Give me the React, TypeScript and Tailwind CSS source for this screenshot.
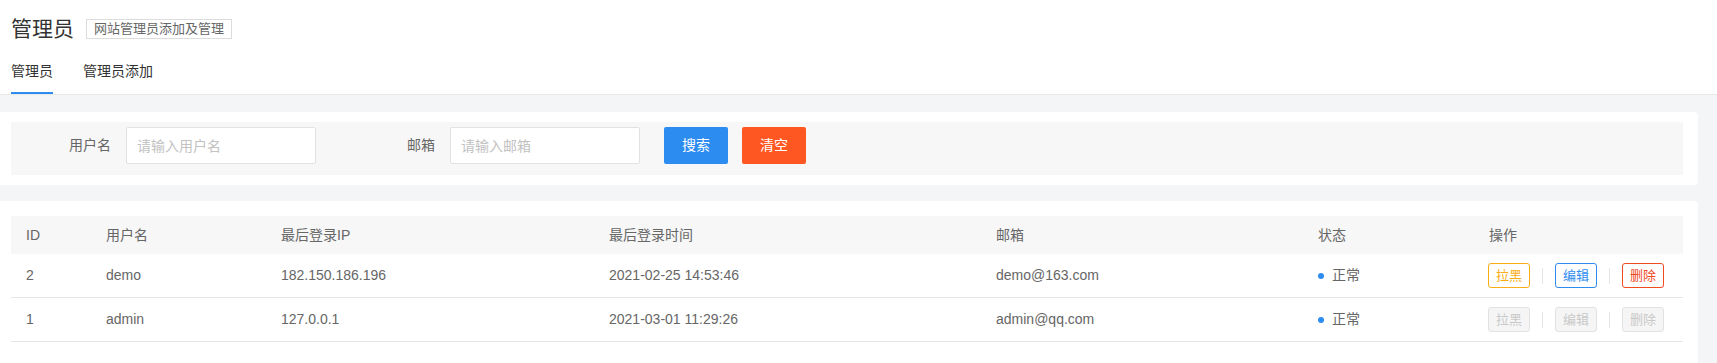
import React from 'react';

type Admin = {
    id: number;
    name: string;
    ip: string;
    time: string;
    email: string;
    active: boolean;
};

const ADMINS: Admin[] = [
    { id: 2, name: 'demo', ip: '182.150.186.196', time: '2021-02-25 14:53:46', email: 'demo@163.com', active: true },
    { id: 1, name: 'admin', ip: '127.0.0.1', time: '2021-03-01 11:29:26', email: 'admin@qq.com', active: false },
];

const COLS = 'grid grid-cols-[80px_175px_328px_387px_322px_171px_1fr]';

const ActionBtn: React.FC<{ label: string; tone: string; disabled?: boolean }> = ({ label, tone, disabled }) => (
    <button
        className={
            'h-[25px] w-[42px] rounded-[3px] border text-[13px] leading-none ' +
            (disabled ? 'border-[#e2e2e2] bg-[#f5f5f5] text-[#c9c9c9]' : tone)
        }
    >
        {label}
    </button>
);

const Sep = () => <span className="mx-[12px] h-[16px] w-px bg-[#e6e6e6]" />;

export default function App() {
    return (
        <div className="min-h-[363px] bg-[#f4f5f7] font-['Liberation_Sans','Noto_Sans_CJK_SC',sans-serif] text-[#666]">
            <div className="border-b border-[#e8e8e8] bg-white px-[11px]">
                <div className="flex items-center pt-[16px]">
                    <h1 className="text-[21px] leading-[26px] text-[#333]">管理员</h1>
                    <span className="ml-[12px] border border-[#dcdcdc] px-[7px] text-[13px] leading-[18px] text-[#666]">网站管理员添加及管理</span>
                </div>
                <div className="mt-[15px] flex text-[14px] text-[#333]">
                    <div className="border-b-2 border-[#2d8cf0] pb-[10px] pt-[4px]">管理员</div>
                    <div className="ml-[30px] pb-[10px] pt-[4px]">管理员添加</div>
                </div>
            </div>

            <div className="mt-[17px] mr-[19px] rounded-r-[4px] bg-white pl-[11px] pr-[15px] py-[10px]">
                <div className="flex items-start bg-[#f7f7f7] pt-[5px] pb-[11px] text-[14px]">
                    <label className="w-[100px] text-right leading-[37px]">用户名</label>
                    <input
                        className="ml-[15px] h-[37px] w-[190px] rounded-[2px] border border-[#e2e2e2] bg-white px-[10px] text-[14px] outline-none placeholder:text-[#c2c2c2]"
                        placeholder="请输入用户名"
                    />
                    <label className="ml-[19px] w-[100px] text-right leading-[37px]">邮箱</label>
                    <input
                        className="ml-[15px] h-[37px] w-[190px] rounded-[2px] border border-[#e2e2e2] bg-white px-[10px] text-[14px] outline-none placeholder:text-[#c2c2c2]"
                        placeholder="请输入邮箱"
                    />
                    <button className="ml-[24px] h-[37px] w-[64px] rounded-[2px] bg-[#2d8cf0] text-[14px] text-white">搜索</button>
                    <button className="ml-[14px] h-[37px] w-[64px] rounded-[2px] bg-[#ff5722] text-[14px] text-white">清空</button>
                </div>
            </div>

            <div className="mt-[16px] mr-[19px] rounded-r-[4px] bg-white pl-[11px] pr-[15px] pt-[15px] pb-[22px] text-[14px]">
                <div className={COLS + ' h-[38px] items-center bg-[#f7f7f7] text-[#666]'}>
                    <div className="pl-[15px]">ID</div>
                    <div className="pl-[15px]">用户名</div>
                    <div className="pl-[15px]">最后登录IP</div>
                    <div className="pl-[15px]">最后登录时间</div>
                    <div className="pl-[15px]">邮箱</div>
                    <div className="pl-[15px]">状态</div>
                    <div className="pl-[15px]">操作</div>
                </div>
                {ADMINS.map(a => (
                    <div key={a.id} className={COLS + ' h-[44px] items-center border-b border-[#e6e6e6]'}>
                        <div className="pl-[15px]">{a.id}</div>
                        <div className="pl-[15px]">{a.name}</div>
                        <div className="pl-[15px]">{a.ip}</div>
                        <div className="pl-[15px]">{a.time}</div>
                        <div className="pl-[15px]">{a.email}</div>
                        <div className="flex items-center pl-[15px]">
                            <span className="mr-[8px] h-[6px] w-[6px] rounded-full bg-[#2d8cf0]" />
                            正常
                        </div>
                        <div className="flex items-center pl-[14px]">
                            <ActionBtn label="拉黑" tone="border-[#faad14] text-[#faad14]" disabled={!a.active} />
                            <Sep />
                            <ActionBtn label="编辑" tone="border-[#2d8cf0] text-[#2d8cf0]" disabled={!a.active} />
                            <Sep />
                            <ActionBtn label="删除" tone="border-[#f04a1f] text-[#f04a1f]" disabled={!a.active} />
                        </div>
                    </div>
                ))}
            </div>
        </div>
    );
}
